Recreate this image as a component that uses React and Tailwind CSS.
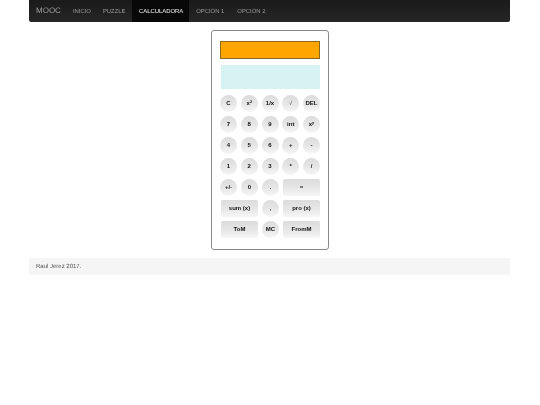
const NAV = [
  ['INICIO', 'px-[6px]'],
  ['PUZZLE', 'pl-[6px] pr-[7px]'],
  ['CALCULADORA', 'pl-[6.5px] pr-[5.5px]'],
  ['OPCIÓN 1', 'pl-[7.5px] pr-[6.5px]'],
  ['OPCIÓN 2', 'px-[6.5px]'],
]

const ROWS = [
  [['C'], ['x²'], ['1/x'], ['√', 'faint'], ['DEL']],
  [['7'], ['8'], ['9'], ['int'], ['xʸ']],
  [['4'], ['5'], ['6'], ['+'], ['-']],
  [['1'], ['2'], ['3'], ['*'], ['/']],
  [['+/-'], ['0'], ['.'], ['=', 'wide']],
  [['sum (x)', 'wide'], [','], ['pro (x)', 'wide']],
  [['ToM', 'wide'], ['MC'], ['FromM', 'wide']],
]

function Key({ label, kind }) {
  const shape = kind === 'wide' ? 'w-[37px] rounded-[2px]' : 'w-[17px] rounded-full'
  const ink = kind === 'faint' ? 'text-[#777]' : 'text-[#111]'
  return (
    <button
      className={`h-[17px] ${shape} ${ink} flex items-center justify-center bg-gradient-to-b from-[#dcdcdc] via-[#e6e6e6] to-[#f6f6f6] text-[6px] font-bold`}
    >
      {label}
    </button>
  )
}

export default function App() {
  return (
    <div className="min-h-[405px] bg-white font-['Liberation_Sans',Arial,sans-serif] [text-rendering:geometricPrecision]">
      <div className="ml-[29px] mr-[30px] will-change-transform">
        <nav className="flex h-[22px] items-stretch rounded-b-[2px] bg-gradient-to-b from-[#1a1a1a] to-[#262626] px-[7px]">
          <span className="flex items-center pr-[6px] text-[8px] text-[#9d9d9d]">MOOC</span>
          {NAV.map(([item, pad]) => (
            <span
              key={item}
              className={
                item === 'CALCULADORA'
                  ? `flex items-center bg-[#080808] pt-[2px] text-[5.9px] text-white ${pad}`
                  : `flex items-center pt-[2px] text-[5.9px] text-[#9d9d9d] ${pad}`
              }
            >
              {item}
            </span>
          ))}
        </nav>

        <main className="flex justify-center pl-[1px] pt-2">
          <div className="flex h-[220px] w-[118px] flex-col rounded-[3px] border border-[#8a8a8a] px-2 pt-[10px]">
            <div className="h-[18px] border border-[#8a6a1e] bg-[#ffa500]" />
            <div className="ml-[1px] mt-[6px] h-[24px] bg-[#d6f2f2]" />
            <div className="mt-[6px] flex flex-col gap-1">
              {ROWS.map((row, i) => (
                <div key={i} className={i > 4 ? 'flex justify-between pl-[1px]' : 'flex justify-between'}>
                  {row.map(([label, kind]) => (
                    <Key key={label} label={label} kind={kind} />
                  ))}
                </div>
              ))}
            </div>
          </div>
        </main>

        <footer className="mt-2 flex h-[17px] items-center bg-[#f5f5f5] px-[7px] pt-[1px] text-[6px] text-[#555]">
          Raul Jerez 2017.
        </footer>
      </div>
    </div>
  )
}
